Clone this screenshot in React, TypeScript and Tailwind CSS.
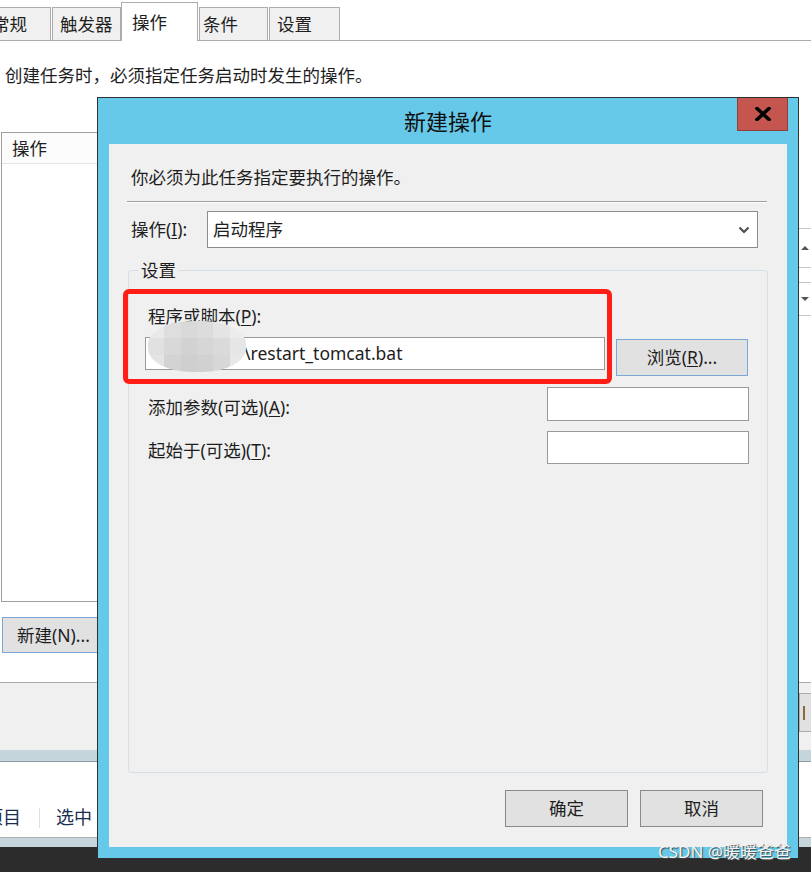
import type { ReactNode } from 'react';

const mosaic = [
  'bg-[#e9e9e9]', 'bg-[#dedede]', 'bg-[#d9d9d9]', 'bg-[#dcdcdc]', 'bg-[#e4e4e4]', 'bg-[#ececec]',
  'bg-[#e1e1e1]', 'bg-[#d8d8d8]', 'bg-[#d2d2d2]', 'bg-[#d6d6d6]', 'bg-[#dadada]', 'bg-[#e6e6e6]',
  'bg-[#e4e4e4]', 'bg-[#d3d3d3]', 'bg-[#cfcfcf]', 'bg-[#d1d1d1]', 'bg-[#d7d7d7]', 'bg-[#e8e8e8]',
];

function Key({ children }: { children: ReactNode }) {
  return <span className="underline underline-offset-2">{children}</span>;
}

function BackgroundWindow() {
  return (
    <div className="flex flex-col">
      {/* tabs */}
      <div className="flex h-[41px] items-end border-b border-[#acacac] bg-white">
        <div className="-ml-[16px] flex h-[33px] w-[67px] items-center border border-b-0 border-[#acacac] bg-[#f0f0f0] pl-[7px]">
          常规
        </div>
        <div className="ml-px flex h-[33px] w-[69px] items-center border border-b-0 border-[#acacac] bg-[#f0f0f0] pl-[7px]">
          触发器
        </div>
        <div className="relative -mb-px flex h-[39px] w-[77px] items-start border border-b-0 border-[#acacac] bg-white pl-[10px] pt-[6px]">
          操作
        </div>
        <div className="ml-px flex h-[33px] w-[69px] items-center border border-b-0 border-[#acacac] bg-[#f0f0f0] pl-[3px]">
          条件
        </div>
        <div className="ml-px flex h-[33px] w-[71px] items-center border border-b-0 border-[#acacac] bg-[#f0f0f0] pl-[7px]">
          设置
        </div>
      </div>

      <div className="flex h-[641px] bg-white">
        <div className="flex-1">
          <p className="mt-[22px] pl-[5px] leading-6">创建任务时，必须指定任务启动时发生的操作。</p>
          <div className="ml-px mt-[45px] h-[470px] w-[200px] border border-[#a0a0a0] bg-white">
            <div className="flex h-[31px] items-center border-b border-[#e5e5e5] bg-[#fcfcfc] pl-[10px]">操作</div>
          </div>
          <button className="ml-[2px] mt-[15px] flex h-[36px] w-[110px] items-center border border-[#7aa7d6] bg-[#e1e1e1] pl-[14px]">
            新建(N)...
          </button>
        </div>
        <div className="w-[12px] pt-[187px]">
          <div className="flex h-[40px] items-center border-y border-[#c8c8c8] bg-white pl-[2px]">
            <div className="h-0 w-0 border-x-[4px] border-b-[4px] border-x-transparent border-b-[#555]" />
          </div>
          <div className="mt-[14px] flex h-[34px] items-center border-y border-[#c8c8c8] bg-white pl-[2px]">
            <div className="h-0 w-0 border-x-[4px] border-t-[4px] border-x-transparent border-t-[#555]" />
          </div>
        </div>
      </div>

      <div className="flex h-[68px] justify-end border-t border-[#a9a9a9] bg-[#f0f0f0] pt-[10px]">
        <div className="flex h-[39px] w-[12px] items-center border border-r-0 border-[#adadad] bg-[#e1e1e1] pl-[3px]">
          <span className="block h-[14px] w-[2px] bg-[#8a6a3a]" />
        </div>
      </div>
      <div className="h-[12px] border-b border-[#8d9ca3] bg-[#c4d6dc]" />
      <div className="flex h-[75px] items-end bg-white pb-[6px] text-[18px] text-[#1a2e50]">
        <span className="-ml-[15px]">项目</span>
        <span className="mb-[3px] ml-[18px] h-[20px] w-px bg-[#e0e0e0]" />
        <span className="ml-[16px]">选中</span>
      </div>
      <div className="h-[10px] border-t border-[#b0b0b0] bg-[#c4d6dc]" />
      <div className="h-[25px] bg-[#2c2c2c]" />
    </div>
  );
}

function NewActionDialog() {
  return (
    <div className="absolute left-[97px] top-[97px] flex h-[762px] w-[702px] flex-col border border-[#303030] bg-[#66c9e9]">
      <div className="relative flex h-[46px] items-center justify-center text-[22px] text-[#111]">
        新建操作
        <div className="absolute right-[10px] top-0 flex h-[33px] w-[51px] items-center justify-center border border-t-0 border-[#8f3f3a] bg-[#c4564f]">
          <svg width="16" height="14" viewBox="0 0 16 14">
            <path d="M2 1.5 L14 12.5 M14 1.5 L2 12.5" stroke="#000" strokeWidth="3.6" strokeLinecap="square" />
          </svg>
        </div>
      </div>

      <div className="ml-[11px] flex h-[703px] w-[678px] flex-col bg-[#f0f0f0]">
        <p className="pl-[22px] pt-[21px] leading-6">你必须为此任务指定要执行的操作。</p>
        <div className="ml-[18px] mr-[20px] mt-[12px] border-y border-b-white border-t-[#a0a0a0]" />

        <div className="mt-[8px] flex h-[37px] items-center">
          <div className="w-[98px] pl-[22px]">
            操作(<Key>I</Key>):
          </div>
          <div className="flex h-[37px] w-[551px] items-center justify-between border border-[#8c8c8c] bg-white pl-[5px] pr-[7px]">
            <span>启动程序</span>
            <svg width="12" height="8" viewBox="0 0 12 8">
              <path d="M1.5 1.5 L6 6 L10.5 1.5" fill="none" stroke="#505050" strokeWidth="2.2" />
            </svg>
          </div>
        </div>

        <div className="relative mx-[19px] mt-[22px] h-[503px] rounded-[3px] border border-[#d5dfe5] pl-[16px] pr-[18px] pt-[33px]">
          <span className="absolute -top-[13px] left-[9px] bg-[#f0f0f0] px-[3px] leading-6">设置</span>
          <div className="ml-[3px] leading-6">
            程序或脚本(<Key>P</Key>):
          </div>
          <div className="mt-[9px] flex items-start">
            <div className="flex h-[33px] w-[460px] items-center border border-[#9a9a9a] bg-white pl-[98px]">
              \restart_tomcat.bat
            </div>
            <button className="ml-[11px] mt-[2px] flex h-[37px] w-[132px] items-center justify-center border border-[#7aa7d6] bg-[#e1e1e1]">
              浏览(<Key>R</Key>)...
            </button>
          </div>
          <div className="mt-[11px] flex items-center justify-between">
            <span className="ml-[3px] mt-[6px]">
              添加参数(可选)(<Key>A</Key>):
            </span>
            <div className="h-[34px] w-[202px] border border-[#9a9a9a] bg-white" />
          </div>
          <div className="mt-[10px] flex items-center justify-between">
            <span className="ml-[3px] mt-[5px]">
              起始于(可选)(<Key>T</Key>):
            </span>
            <div className="h-[33px] w-[202px] border border-[#9a9a9a] bg-white" />
          </div>
        </div>

        <div className="mt-[17px] flex justify-end gap-[12px] pr-[24px]">
          <button className="flex h-[37px] w-[123px] items-center justify-center border border-[#8a8a8a] bg-[#e1e1e1]">确定</button>
          <button className="flex h-[37px] w-[123px] items-center justify-center border border-[#8a8a8a] bg-[#e1e1e1]">取消</button>
        </div>
      </div>
    </div>
  );
}

export default function App() {
  return (
    <div className="relative h-[872px] w-[811px] overflow-hidden bg-white font-['Noto_Sans','Noto_Sans_CJK_SC',sans-serif] text-[17.5px] text-[#1e1e1e]">
      <BackgroundWindow />
      <NewActionDialog />

      {/* pixelated privacy blur over the script path */}
      <div className="absolute left-[148px] top-[321px] grid h-[51px] w-[98px] grid-cols-6 overflow-hidden rounded-[45%]">
        {mosaic.map((c, i) => (
          <div key={i} className={c} />
        ))}
      </div>

      {/* red annotation box */}
      <div className="absolute left-[123px] top-[289px] h-[95px] w-[489px] rounded-[6px] border-[5px] border-[#ff1d16]" />

      <div className="absolute left-[658px] top-[839px] text-[17px] text-[#f4f4f4] [text-shadow:1px_1px_1px_#444]">
        CSDN @暖暖爸爸
      </div>
    </div>
  );
}
